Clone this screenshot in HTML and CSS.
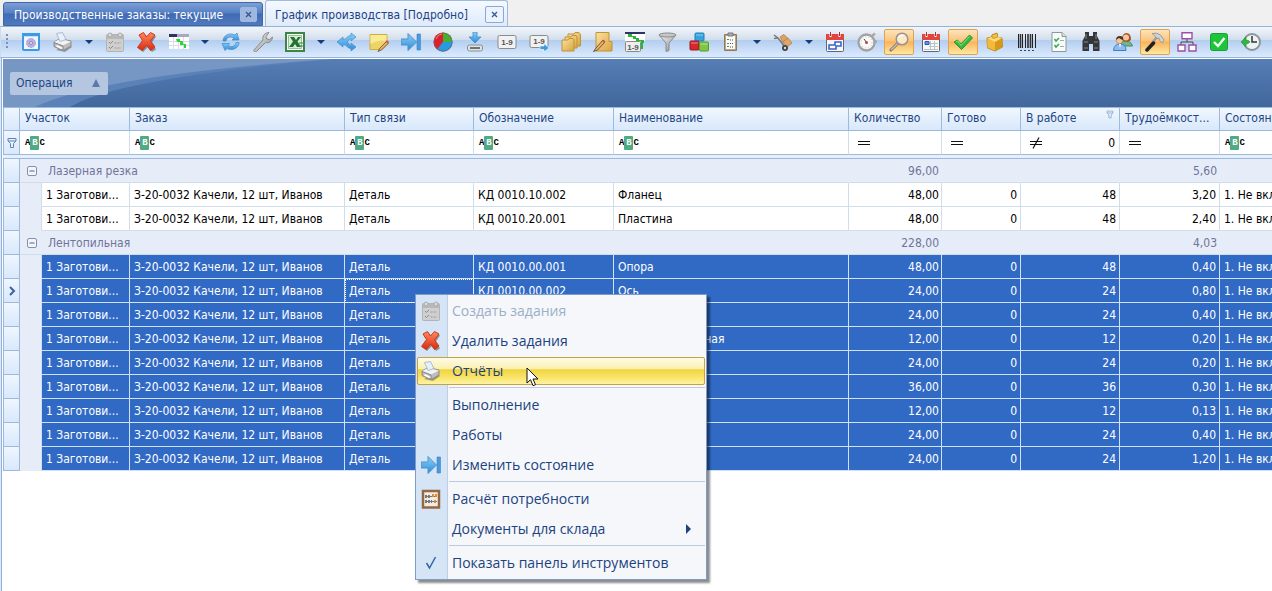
FILE: index.html
```html
<!DOCTYPE html>
<html lang="ru">
<head>
<meta charset="utf-8">
<title>График производства</title>
<link rel="stylesheet" href="styles.css">
</head>
<body>
<svg class="sprite" aria-hidden="true">
  <defs>
    <linearGradient id="gBlue" x1="0" y1="0" x2="0" y2="1"><stop offset="0" stop-color="#8fd0f7"/><stop offset="1" stop-color="#2c8bd8"/></linearGradient>
    <linearGradient id="gGold" x1="0" y1="0" x2="1" y2="1"><stop offset="0" stop-color="#fbe3a0"/><stop offset="1" stop-color="#d9a43c"/></linearGradient>
    <linearGradient id="gGray" x1="0" y1="0" x2="1" y2="1"><stop offset="0" stop-color="#f4f4f4"/><stop offset="1" stop-color="#8c8c8c"/></linearGradient>
    <linearGradient id="gRed" x1="0" y1="0" x2="0" y2="1"><stop offset="0" stop-color="#ff8a5c"/><stop offset="1" stop-color="#d92a12"/></linearGradient>
    <symbol id="i-window" viewBox="0 0 20 20"><rect x="2" y="2" width="16" height="16" rx="1" fill="#f3f5fc" stroke="#3c9be6" stroke-width="2"/><path d="M1 1h18v3H1z" fill="#3c9be6"/><path d="M3 4h14v1H3z" fill="#bfe0fa"/><circle cx="10" cy="11" r="4.500" fill="#b9b0dc" stroke="#a69ecf" stroke-dasharray="2 1"/><circle cx="10" cy="11" r="1.500" fill="#f3f1fb" stroke="#8d84bb"/></symbol>
    <symbol id="i-printer" viewBox="0 0 20 20"><path d="M3 18l9 2 7-5-3-3z" fill="#444" opacity=".45"/><path d="M1 10l6-3.500 11 2.500v5l-8 4.500-9-4z" fill="#bdbdbd" stroke="#8a8a8a"/><path d="M1 10l6-3 11 2.500-8 4z" fill="#f2f2f2"/><path d="M3.500 1.500l6-1 3.500 7-6 2z" fill="#e3f0fd" stroke="#9fb0c2" stroke-width=".8"/><path d="M1 10.500l9 3.500v4.500" fill="none" stroke="#888"/><path d="M3 14.500l5 2.500 2-1-6-3z" fill="#fff"/></symbol>
    <symbol id="i-tasks" viewBox="0 0 20 20"><rect x="1.500" y="2.500" width="17" height="17" rx="1" fill="#cfcfcf" stroke="#b4b4b4"/><path d="M2 3h16v4H2z" fill="#b8b8b8"/><circle cx="5" cy="3" r="2" fill="#ddd" stroke="#aaa"/><circle cx="15" cy="3" r="2" fill="#ddd" stroke="#aaa"/><path d="M4 10l1.500 1.500L8 9M4 15l1.500 1.500L8 14" fill="none" stroke="#888"/><path d="M9.500 11H16M9.500 16H16" stroke="#999" stroke-dasharray="2 1"/></symbol>
    <symbol id="i-delete" viewBox="0 0 20 20"><path d="M4 4l5-1 2 4 4-5 4 2.500-4 6 4 7-4 2.500-4-5-5 5-4-3 4-6z" fill="#444" opacity=".5"/><path d="M2 3l4.500-2.500 3 4.500L13.500.500 18 3l-4.500 6L18 15l-4.500 3.500-4-5.500-4 5.500-5-3 5-7z" fill="url(#gRed)" stroke="#c93818" stroke-linejoin="round"/></symbol>
    <symbol id="i-gantt" viewBox="0 0 20 20"><path d="M0 3h20v14H0z" fill="#fff"/><path d="M0 2h8v3H0z" fill="#30315c"/><path d="M8 2h12v3H8z" fill="#a9a8c2"/><path d="M0 9.500h20M0 13.500h20M4.500 5v12M9.500 5v12M14.500 5v12" stroke="#dcdcec"/><path d="M7 7h4v2h3v3h3v4h-2v-3h-4v-3H8z" fill="#2fd33b"/></symbol>
    <symbol id="i-refresh" viewBox="0 0 20 20"><path d="M2 9c0-5 6-9 12-6l2-2 2 7h-7l2-2C9 4 6 5 5 9z" fill="url(#gBlue)" stroke="#4b8fd0" stroke-width=".8"/><path d="M18 10.500c0 5-6 9-12 6l-2 2-3-7h7.500L7 13.500c4 2 7 1 8-3z" fill="url(#gBlue)" stroke="#4b8fd0" stroke-width=".8"/></symbol>
    <symbol id="i-wrench" viewBox="0 0 20 20"><path d="M1 18l9-10c-1-4 2-7.500 6-7.500l-3 4 .500 2.500 3 .500L19.500 5c0 4-4 6.500-7 5.500L3.500 19.500c-1 1-3.500 0-2.500-1.500z" fill="url(#gGray)" stroke="#8c8c8c"/></symbol>
    <symbol id="i-excel" viewBox="0 0 20 20"><path d="M1 1h18v18H1z" fill="#fff" stroke="#3c8547" stroke-width="2"/><path d="M3.500 3.500h13v13h-13z" fill="#d9efd5" stroke="#93c193"/><path d="M5 5h4l2 3 2-3h3l-3.500 4.500L16 15h-4l-2-3-2 3H4l4-5.500z" fill="#247132"/><path d="M14 14h4M14 11h4" stroke="#3c8547"/></symbol>
    <symbol id="i-share" viewBox="0 0 20 20"><path d="M0 10l6-5v2.500c4 0 4-4 8-4V1L19 5l-5 4V6.500c-2 0-2 3-4 3.500 2 .500 2 3.500 4 3.500V11l5 4-5 4v-2.500c-4 0-4-4-8-4V15z" fill="url(#gBlue)" stroke="#4a94d2" stroke-width=".8"/></symbol>
    <symbol id="i-note" viewBox="0 0 20 20"><path d="M1 2.500h17v10l-5 5H1z" fill="#ecd565" stroke="#cfae3c"/><path d="M1.500 3h16v6q-8-2-16 3z" fill="#f8ea97"/><path d="M18 9l-7 7-2 3.500 3.500-1.500 7-7z" fill="#efb06a" stroke="#6b4a2b" stroke-width=".8"/><path d="M16.500 9.500l2 2L20 10l-2-2z" fill="#df5447"/></symbol>
    <symbol id="i-forward" viewBox="0 0 20 20"><path d="M0 7h7V1.500L15.500 10 7 18.500V13H0z" fill="url(#gBlue)" stroke="#4a94d2"/><path d="M16 2h3.500v16H16z" fill="#4b9ade" stroke="#3b84c6" stroke-width=".6"/></symbol>
    <symbol id="i-pie" viewBox="0 0 20 20"><circle cx="10" cy="10" r="9.500" fill="#d9222b"/><path d="M10 10V.500a9.500 9.500 0 0 1 9.500 9.500z" fill="#45b02f"/><path d="M10 10h9.500A9.500 9.500 0 0 1 4 17.300z" fill="#279be0"/><circle cx="10" cy="10" r="9" fill="none" stroke="#666" opacity=".55"/><path d="M3 7Q5 2 9 2" stroke="#ff7d7d" fill="none"/></symbol>
    <symbol id="i-download" viewBox="0 0 20 20"><path d="M8 0h4v5h4l-6 6-6-6h4z" fill="url(#gBlue)" stroke="#3b8fd0" stroke-width=".8"/><rect x="2.500" y="13" width="15" height="6" rx="2" fill="#dfe2e5" stroke="#8b9095"/><path d="M5 16h10" stroke="#6a747d" stroke-width="2"/></symbol>
    <symbol id="i-num" viewBox="0 0 20 20"><rect x="1" y="3.500" width="18" height="13" rx="1.500" fill="#f1f1f1" stroke="#8b8b8b"/><text x="10" y="12.500" class="glyph">1-9</text></symbol>
    <symbol id="i-num-next" viewBox="0 0 20 20"><rect x="1" y="3.500" width="18" height="12" rx="1.500" fill="#f1f1f1" stroke="#8b8b8b"/><text x="10" y="12" class="glyph">1-9</text><path d="M11 14h4v-2.500l5 4.500-5 4v-2.500h-4z" fill="#3c9bdf" stroke="#fff" stroke-width=".6"/></symbol>
    <symbol id="i-folders" viewBox="0 0 20 20"><path d="M7 2h6l1-1.500h4l1.500 2V14H7z" fill="url(#gGold)" stroke="#c0923a"/><path d="M4 5h6l1-1.500h4L16 5v11H4z" fill="url(#gGold)" stroke="#c0923a"/><path d="M1 8h6l1-1.500h4L13 8v11H1z" fill="url(#gGold)" stroke="#c0923a"/></symbol>
    <symbol id="i-folder-edit" viewBox="0 0 20 20"><path d="M3 .500h13v9h3V19H3z" fill="url(#gGold)" stroke="#c0923a"/><path d="M10 8l-7 8-2.500 3.500 4-1.500 7.500-8z" fill="#efb06a" stroke="#513c28" stroke-width=".8"/><path d="M9 9l2 2 1.500-1.500-2-2z" fill="#df5447"/></symbol>
    <symbol id="i-gantt-num" viewBox="0 0 20 20"><path d="M0 0h20v9H0z" fill="#fff"/><path d="M0 0h20v2H0z" fill="#2e3364"/><path d="M3 2h4v2h4v2h3v2h5v3h-3V9h-5V7H8V5H3z" fill="#2ab535"/><rect x=".5" y="9.500" width="15" height="10" rx="1" fill="#eee" stroke="#888"/><text x="8" y="17.500" class="glyph">1-9</text><path d="M17 11v6" stroke="#2ab535" stroke-width="2"/></symbol>
    <symbol id="i-funnel" viewBox="0 0 20 20"><path d="M2 3l7 8v8.500l3-1V11l7-8z" fill="url(#gGray)" stroke="#8a8a8a"/><ellipse cx="10.500" cy="3" rx="8.500" ry="2" fill="#c4c7ca" stroke="#8a8a8a"/></symbol>
    <symbol id="i-cubes" viewBox="0 0 20 20"><rect x="6" y="1" width="9" height="8" rx="1" fill="#34a4df" stroke="#2180b5"/><rect x="1" y="9" width="9" height="9" rx="1" fill="#d7262c" stroke="#9d181c"/><rect x="10.500" y="10" width="9" height="9" rx="1" fill="#7fc646" stroke="#589c29"/><path d="M7 3h7M2 11h7M11.500 12h7" stroke="#fff" opacity=".45"/></symbol>
    <symbol id="i-clip" viewBox="0 0 20 20"><path d="M3.500 2.500h12v16h-12z" fill="#bda583" stroke="#8f7a5d"/><path d="M5 4h9v13H5z" fill="#fafafa"/><path d="M7 1h5v3H7z" fill="#aaa" stroke="#7b7b7b"/><path d="M6 7l1 1 1-1M6 11l1 1 1-1M6 14l1 1 1-1" stroke="#3c9f3c" fill="none"/><path d="M9 8h4M9 11.500h4M9 15h4" stroke="#555" stroke-dasharray="1 1"/></symbol>
    <symbol id="i-trolley" viewBox="0 0 20 20"><path d="M1 3l4 3 7 9" stroke="#777" stroke-width="1.500" fill="none"/><path d="M1 6.500l4-.500" stroke="#777" stroke-width="1.500"/><path d="M7 5l4-2.500 4 4-5 3.500z" fill="#dba267" stroke="#b5803f" stroke-width=".8"/><path d="M10 10l5-4 4 5-5 4z" fill="#e0a868" stroke="#b5803f" stroke-width=".8"/><circle cx="12" cy="16" r="3" fill="#444"/><circle cx="12" cy="16" r="1.200" fill="#ddd"/></symbol>
    <symbol id="i-cal-plan" viewBox="0 0 20 20"><rect x="1.500" y="2.500" width="17" height="17" rx="1" fill="#f8f8fb" stroke="#63656f"/><path d="M1 2h18v6H1z" fill="#e2443f"/><path d="M5.500 0v5M14.500 0v5" stroke="#fff" stroke-width="2"/><path d="M5.500 0v4M14.500 0v4" stroke="#9c3432"/><path d="M4 17v-4h6v-3h6v4h-5v3z" fill="#fff" stroke="#3c62d0" stroke-width="1.600"/></symbol>
    <symbol id="i-cal" viewBox="0 0 20 20"><rect x="1.500" y="2.500" width="17" height="17" rx="1" fill="#f8f8fb" stroke="#63656f"/><path d="M1 2h18v6H1z" fill="#e2443f"/><path d="M5.500 0v5M14.500 0v5" stroke="#fff" stroke-width="2"/><path d="M5.500 0v4M14.500 0v4" stroke="#9c3432"/><path d="M8 11.500h9M8 14.500h9M3 17.500h14M9.500 9v9M13.500 9v9" stroke="#b5c6c6"/><path d="M4 9.500h4v3H4z" fill="#6c8ee4" stroke="#3458bd"/></symbol>
    <symbol id="i-watch" viewBox="0 0 20 20"><path d="M15 4l3-2.500M18 8l1.500 3" stroke="#aaa" stroke-width="2.500"/><circle cx="9.500" cy="10.500" r="8" fill="#fafafa" stroke="#a2a2a2" stroke-width="2.300"/><circle cx="9.500" cy="10.500" r="5.500" fill="none" stroke="#bbb" stroke-dasharray="1 2"/><path d="M7 7l3 4" stroke="#444"/><circle cx="9.500" cy="10.500" r="1.500" fill="#b44"/></symbol>
    <symbol id="i-search" viewBox="0 0 20 20"><path d="M9 11l-7 7" stroke="#7f7060" stroke-width="3" stroke-linecap="round"/><path d="M9 11l-7 7" stroke="#c7c1bd" stroke-width="1.500"/><circle cx="13" cy="7" r="5.800" fill="#fbe9ca" stroke="#9a948e" stroke-width="1.500"/><path d="M9.500 6Q11 3 14 3.500" stroke="#fff" stroke-width="1.500" fill="none"/></symbol>
    <symbol id="i-check" viewBox="0 0 20 20"><path d="M1 10l3.500-2L8 12l8.500-9L19.500 6 8.500 17.500z" fill="#38b83e" stroke="#2a9632"/><path d="M3 10l2-1L8 13.500 16.500 4.500" stroke="#84e27f" fill="none"/></symbol>
    <symbol id="i-box" viewBox="0 0 20 20"><path d="M2 6l5-1V3l5-2v4l5 1 .5 9L10 19l-7.500-3z" fill="#eeb22c" stroke="#c08a1c"/><path d="M2.500 6.500L10 10v8.500l7-3.500V6z" fill="#d9971b"/><path d="M2.500 6.500v9L10 18.500V10z" fill="#f2b93a"/><path d="M2.500 6.500L9 4l8 2-7 4z" fill="#fbdc7a"/><path d="M7 3l4-1.500 1.500.500v3L9 6.500 7 5.500z" fill="#f3c14b" stroke="#b98216" stroke-width=".7"/></symbol>
    <symbol id="i-barcode" viewBox="0 0 20 20"><path d="M1.500 2v14M5.500 2v14M8.500 2v14M15.500 2v14M18.500 2v14" stroke="#222"/><path d="M3.500 2v14M11 2v14M13.500 2v14" stroke="#333" stroke-width="1.600"/><path d="M3 18.500h14" stroke="#444" stroke-dasharray="2 2"/></symbol>
    <symbol id="i-list" viewBox="0 0 20 20"><path d="M3 .500h10l4 4v15H3z" fill="#f7fbfa" stroke="#8a9a9a"/><path d="M13 .500v4h4" fill="#d6e0e0" stroke="#8a9a9a"/><path d="M5.500 7l1.500 2 3-3M5.500 13l1.500 2 3-3" stroke="#38a84c" fill="none" stroke-width="1.500"/><path d="M11 8.500h4M11 14.500h4" stroke="#9fb0a8"/></symbol>
    <symbol id="i-binoc" viewBox="0 0 20 20"><path d="M4 0h4v4h4V0h4v4l2.500 5v10H12v-7H8v7H1.500V9L4 4z" fill="#343638"/><path d="M3 10h4M13 10h4M3 16h4M13 16h4M5 2v5M15 2v5" stroke="#85898c"/></symbol>
    <symbol id="i-people" viewBox="0 0 20 20"><path d="M8 14q0-5 5-5t6.500 5z" fill="#73b48c" stroke="#4c8b66"/><path d="M9 8q0-7 4.500-7T18 8l-3 2-5-1z" fill="#a65225"/><circle cx="13" cy="5.500" r="3" fill="#f1c79f"/><path d="M.5 18.500Q1 12 7 12t6 6.500z" fill="#8bbdf0" stroke="#3f7fc5"/><circle cx="6.500" cy="8.500" r="3.300" fill="#f1c79f" stroke="#a27347" stroke-width=".6"/><path d="M3 8q0-4 4-4t3 4Q7 7 6 6 4 7 3 8z" fill="#4a3422"/><path d="M6 12l1 4 1-4" fill="#fff"/></symbol>
    <symbol id="i-hammer" viewBox="0 0 20 20"><path d="M12 5l-5 6" stroke="#9a9da0" stroke-width="2.500"/><path d="M7 1.500q5-1.500 8.500 1.500l3.500 5-1.500 3-3-2.500-.500-2.500-2 .500-2-2.500z" fill="#cdd2d6" stroke="#8b8f93" stroke-width=".8"/><path d="M8.500 11L2 18" stroke="#202020" stroke-width="3.500" stroke-linecap="round"/></symbol>
    <symbol id="i-org" viewBox="0 0 20 20"><path d="M4 13v-3h12v3M10 6v4" stroke="#444" fill="none"/><path d="M5 .800h10v6H5zM1 13h7v6H1zM12 13h7v6h-7z" fill="#fff" stroke="#9d4fa3" stroke-width="1.400"/></symbol>
    <symbol id="i-ok" viewBox="0 0 20 20"><rect x="1.500" y="1.500" width="17" height="17" rx="2" fill="#1fc43d" stroke="#1a9e35"/><path d="M5 10l4 4 6.500-8" stroke="#efffee" stroke-width="2.400" fill="none"/></symbol>
    <symbol id="i-history" viewBox="0 0 20 20"><circle cx="11" cy="10" r="8" fill="#eef2f2" stroke="#88979a" stroke-width="2"/><path d="M11 4v6h5" stroke="#333" stroke-width="1.500" fill="none"/><path d="M0 10l5-5v3q3 0 4 2-2 2-4 2v3z" fill="#2cb83c" stroke="#1f8f2e" stroke-width=".6"/></symbol>
    <symbol id="i-abacus" viewBox="0 0 20 20"><rect x="2" y="2" width="16" height="16.500" fill="#f2ece5" stroke="#946845" stroke-width="2.500"/><path d="M4 7.500h12M4 12.500h12" stroke="#777"/><path d="M4 7.500h6M4 12.500h7" stroke="#777" stroke-width="3" stroke-dasharray="2 1"/><path d="M11 6.500h5M13 12.500h3" stroke="#d88b38" stroke-width="3" stroke-dasharray="2 1"/></symbol>
    <symbol id="i-filter" viewBox="0 0 10 12"><path d="M1 1.500h8v2.500L6.500 6.500v4h-3v-4L1 4z" fill="#e8f2fd" stroke="#5f83b5"/><path d="M1 4h8" stroke="#5f83b5"/></symbol>
    <symbol id="i-minus" viewBox="0 0 10 10"><rect x=".5" y=".5" width="9" height="9" rx="1.500" fill="#f2f5fb" stroke="#8790a8"/><path d="M2.500 5h5" stroke="#4e5f84"/></symbol>
    <symbol id="i-eq" viewBox="0 0 14 12"><path d="M1 4.500h12M1 7.500h12" stroke="#111" stroke-width="1.200"/></symbol>
    <symbol id="i-ne" viewBox="0 0 14 12"><path d="M1 4.500h12M1 7.500h12M4 11.500L10 .5" stroke="#111" stroke-width="1.200"/></symbol>
  </defs>
</svg>

<nav class="tabs">
  <div class="tab"><a href="#orders">Производственные заказы: текущие</a><button class="tab-close" aria-label="Закрыть"><svg viewBox="0 0 9 9"><path d="M2 2l5 5M7 2L2 7"/></svg></button></div>
  <div class="tab active"><a href="#chart">График производства [Подробно]</a><button class="tab-close" aria-label="Закрыть"><svg viewBox="0 0 9 9"><path d="M2 2l5 5M7 2L2 7"/></svg></button></div>
</nav>

<div class="toolbar" role="toolbar">
  <span class="grip"></span>
  <button class="tool" aria-label="Настройки"><svg><use href="#i-window"/></svg></button>
  <button class="tool" aria-label="Отчёты"><svg><use href="#i-printer"/></svg></button>
  <button class="drop" aria-label="Список отчётов"></button>
  <button class="tool" aria-label="Создать задания"><svg><use href="#i-tasks"/></svg></button>
  <button class="tool" aria-label="Удалить задания"><svg><use href="#i-delete"/></svg></button>
  <button class="tool" aria-label="График"><svg><use href="#i-gantt"/></svg></button>
  <button class="drop" aria-label="Виды графика"></button>
  <button class="tool" aria-label="Обновить"><svg><use href="#i-refresh"/></svg></button>
  <button class="tool" aria-label="Сервис"><svg><use href="#i-wrench"/></svg></button>
  <button class="tool" aria-label="Экспорт"><svg><use href="#i-excel"/></svg></button>
  <button class="drop" aria-label="Варианты экспорта"></button>
  <button class="tool" aria-label="Разделить"><svg><use href="#i-share"/></svg></button>
  <button class="tool" aria-label="Заметка"><svg><use href="#i-note"/></svg></button>
  <button class="tool" aria-label="Изменить состояние"><svg><use href="#i-forward"/></svg></button>
  <button class="tool" aria-label="Диаграмма"><svg><use href="#i-pie"/></svg></button>
  <button class="tool" aria-label="Загрузить"><svg><use href="#i-download"/></svg></button>
  <button class="tool" aria-label="Номера"><svg><use href="#i-num"/></svg></button>
  <button class="tool" aria-label="Следующий номер"><svg><use href="#i-num-next"/></svg></button>
  <button class="tool" aria-label="Папки"><svg><use href="#i-folders"/></svg></button>
  <button class="tool" aria-label="Изменить папку"><svg><use href="#i-folder-edit"/></svg></button>
  <button class="tool" aria-label="Номера графика"><svg><use href="#i-gantt-num"/></svg></button>
  <button class="tool" aria-label="Фильтр"><svg><use href="#i-funnel"/></svg></button>
  <button class="tool" aria-label="Состав"><svg><use href="#i-cubes"/></svg></button>
  <button class="tool" aria-label="Ведомость"><svg><use href="#i-clip"/></svg></button>
  <button class="drop" aria-label="Ведомости"></button>
  <button class="tool" aria-label="Склад"><svg><use href="#i-trolley"/></svg></button>
  <button class="drop" aria-label="Документы склада"></button>
  <button class="tool" aria-label="План"><svg><use href="#i-cal-plan"/></svg></button>
  <button class="tool" aria-label="Время"><svg><use href="#i-watch"/></svg></button>
  <button class="tool on" aria-label="Поиск" aria-pressed="true"><svg><use href="#i-search"/></svg></button>
  <button class="tool" aria-label="Календарь"><svg><use href="#i-cal"/></svg></button>
  <button class="tool on" aria-label="Выполнение" aria-pressed="true"><svg><use href="#i-check"/></svg></button>
  <button class="tool" aria-label="Комплектация"><svg><use href="#i-box"/></svg></button>
  <button class="tool" aria-label="Штрихкод"><svg><use href="#i-barcode"/></svg></button>
  <button class="tool" aria-label="Список"><svg><use href="#i-list"/></svg></button>
  <button class="tool" aria-label="Найти"><svg><use href="#i-binoc"/></svg></button>
  <button class="tool" aria-label="Исполнители"><svg><use href="#i-people"/></svg></button>
  <button class="tool on" aria-label="Работы" aria-pressed="true"><svg><use href="#i-hammer"/></svg></button>
  <button class="tool" aria-label="Структура"><svg><use href="#i-org"/></svg></button>
  <button class="tool" aria-label="Готово"><svg><use href="#i-ok"/></svg></button>
  <button class="tool" aria-label="История"><svg><use href="#i-history"/></svg></button>
</div>

<main class="grid-view">
  <div class="group-panel">
    <svg class="swoosh" viewBox="0 0 420 48" aria-hidden="true"><path d="M0 0H330Q111 20 67 48H0z" fill="#5b82b8"/><path d="M0 0H330Q99 16 32 48H0z" fill="#7696c3"/></svg>
    <button class="group-chip">Операция<svg class="sort" viewBox="0 0 8 8"><path d="M4 0l4 8H0z"/></svg></button>
  </div>
  <table class="grid">
    <colgroup><col class="c-mark"><col class="c-indent"><col class="c-area"><col class="c-order"><col class="c-link"><col class="c-code"><col class="c-name"><col class="c-qty"><col class="c-done"><col class="c-work"><col class="c-labor"><col class="c-state"></colgroup>
    <thead>
      <tr class="head"><th class="mark"></th><th colspan="2">Участок</th><th>Заказ</th><th>Тип связи</th><th>Обозначение</th><th>Наименование</th><th>Количество</th><th>Готово</th><th><span class="filtered">В работе<svg><use href="#i-filter"/></svg></span></th><th>Трудоёмкост...</th><th>Состояние</th></tr>
      <tr class="filter"><td class="mark"><svg class="row-filter"><use href="#i-filter"/></svg></td>
        <td colspan="2"><label class="cond"><span class="abc"><i>A</i><b>B</b><i>C</i></span><input aria-label="Участок"></label></td>
        <td><label class="cond"><span class="abc"><i>A</i><b>B</b><i>C</i></span><input aria-label="Заказ"></label></td>
        <td><label class="cond"><span class="abc"><i>A</i><b>B</b><i>C</i></span><input aria-label="Тип связи"></label></td>
        <td><label class="cond"><span class="abc"><i>A</i><b>B</b><i>C</i></span><input aria-label="Обозначение"></label></td>
        <td><label class="cond"><span class="abc"><i>A</i><b>B</b><i>C</i></span><input aria-label="Наименование"></label></td>
        <td><label class="cond op"><svg><use href="#i-eq"/></svg><input aria-label="Количество"></label></td>
        <td><label class="cond op"><svg><use href="#i-eq"/></svg><input aria-label="Готово"></label></td>
        <td><label class="cond op"><svg><use href="#i-ne"/></svg><input aria-label="В работе" value="0"></label></td>
        <td><label class="cond op"><svg><use href="#i-eq"/></svg><input aria-label="Трудоёмкость"></label></td>
        <td><label class="cond"><span class="abc"><i>A</i><b>B</b><i>C</i></span><input aria-label="Состояние"></label></td></tr>
      <tr class="band"><td colspan="12"></td></tr>
    </thead>
    <tbody>
      <tr class="group"><td class="mark"></td><td colspan="6"><span class="group-name"><svg><use href="#i-minus"/></svg>Лазерная резка</span></td><td class="num">96,00</td><td></td><td></td><td class="num">5,60</td><td></td></tr>
      <tr><td class="mark"></td><td class="indent"></td><td>1 Заготови...</td><td>З-20-0032 Качели, 12 шт, Иванов</td><td>Деталь</td><td>КД 0010.10.002</td><td>Фланец</td><td class="num">48,00</td><td class="num">0</td><td class="num">48</td><td class="num">3,20</td><td>1. Не включено</td></tr>
      <tr><td class="mark"></td><td class="indent"></td><td>1 Заготови...</td><td>З-20-0032 Качели, 12 шт, Иванов</td><td>Деталь</td><td>КД 0010.20.001</td><td>Пластина</td><td class="num">48,00</td><td class="num">0</td><td class="num">48</td><td class="num">2,40</td><td>1. Не включено</td></tr>
      <tr class="group"><td class="mark"></td><td colspan="6"><span class="group-name"><svg><use href="#i-minus"/></svg>Лентопильная</span></td><td class="num">228,00</td><td></td><td></td><td class="num">4,03</td><td></td></tr>
      <tr class="sel"><td class="mark"></td><td class="indent"></td><td>1 Заготови...</td><td>З-20-0032 Качели, 12 шт, Иванов</td><td>Деталь</td><td>КД 0010.00.001</td><td>Опора</td><td class="num">48,00</td><td class="num">0</td><td class="num">48</td><td class="num">0,40</td><td>1. Не включено</td></tr>
      <tr class="sel"><td class="mark"><svg class="current" viewBox="0 0 8 10"><path d="M2 1l4 4-4 4"/></svg></td><td class="indent"></td><td>1 Заготови...</td><td>З-20-0032 Качели, 12 шт, Иванов</td><td class="focus">Деталь</td><td>КД 0010.00.002</td><td>Ось</td><td class="num">24,00</td><td class="num">0</td><td class="num">24</td><td class="num">0,80</td><td>1. Не включено</td></tr>
      <tr class="sel"><td class="mark"></td><td class="indent"></td><td>1 Заготови...</td><td>З-20-0032 Качели, 12 шт, Иванов</td><td>Деталь</td><td></td><td></td><td class="num">24,00</td><td class="num">0</td><td class="num">24</td><td class="num">0,40</td><td>1. Не включено</td></tr>
      <tr class="sel"><td class="mark"></td><td class="indent"></td><td>1 Заготови...</td><td>З-20-0032 Качели, 12 шт, Иванов</td><td>Деталь</td><td></td><td>Опора поперечная</td><td class="num">12,00</td><td class="num">0</td><td class="num">12</td><td class="num">0,20</td><td>1. Не включено</td></tr>
      <tr class="sel"><td class="mark"></td><td class="indent"></td><td>1 Заготови...</td><td>З-20-0032 Качели, 12 шт, Иванов</td><td>Деталь</td><td></td><td></td><td class="num">24,00</td><td class="num">0</td><td class="num">24</td><td class="num">0,20</td><td>1. Не включено</td></tr>
      <tr class="sel"><td class="mark"></td><td class="indent"></td><td>1 Заготови...</td><td>З-20-0032 Качели, 12 шт, Иванов</td><td>Деталь</td><td></td><td></td><td class="num">36,00</td><td class="num">0</td><td class="num">36</td><td class="num">0,30</td><td>1. Не включено</td></tr>
      <tr class="sel"><td class="mark"></td><td class="indent"></td><td>1 Заготови...</td><td>З-20-0032 Качели, 12 шт, Иванов</td><td>Деталь</td><td></td><td></td><td class="num">12,00</td><td class="num">0</td><td class="num">12</td><td class="num">0,13</td><td>1. Не включено</td></tr>
      <tr class="sel"><td class="mark"></td><td class="indent"></td><td>1 Заготови...</td><td>З-20-0032 Качели, 12 шт, Иванов</td><td>Деталь</td><td></td><td></td><td class="num">24,00</td><td class="num">0</td><td class="num">24</td><td class="num">0,40</td><td>1. Не включено</td></tr>
      <tr class="sel"><td class="mark"></td><td class="indent"></td><td>1 Заготови...</td><td>З-20-0032 Качели, 12 шт, Иванов</td><td>Деталь</td><td></td><td></td><td class="num">24,00</td><td class="num">0</td><td class="num">24</td><td class="num">1,20</td><td>1. Не включено</td></tr>
    </tbody>
  </table>
</main>

<div class="menu" role="menu">
  <button class="item" role="menuitem" disabled><span class="ico"><svg><use href="#i-tasks"/></svg></span>Создать задания</button>
  <button class="item" role="menuitem"><span class="ico"><svg><use href="#i-delete"/></svg></span>Удалить задания</button>
  <button class="item hover" role="menuitem"><span class="ico"><svg><use href="#i-printer"/></svg></span>Отчёты</button>
  <hr>
  <button class="item" role="menuitem"><span class="ico"></span>Выполнение</button>
  <button class="item" role="menuitem"><span class="ico"></span>Работы</button>
  <button class="item" role="menuitem"><span class="ico"><svg><use href="#i-forward"/></svg></span>Изменить состояние</button>
  <hr>
  <button class="item" role="menuitem"><span class="ico"><svg><use href="#i-abacus"/></svg></span>Расчёт потребности</button>
  <button class="item" role="menuitem"><span class="ico"></span>Документы для склада<span class="more"></span></button>
  <hr>
  <button class="item" role="menuitemcheckbox" aria-checked="true"><span class="ico"><svg class="tick" viewBox="0 0 20 20"><path d="M5.500 10l3 5 6-11"/></svg></span>Показать панель инструментов</button>
</div>
<svg class="cursor" viewBox="0 0 13 20" aria-hidden="true"><path d="M1 1v15l3.500-3.300 2.500 6 2.500-1-2.500-5.700h5z" fill="#fff" stroke="#111"/></svg>
</body>
</html>
```
FILE: styles.css
```css
* { box-sizing: border-box; }
html, body { height: 100%; }
body {
  margin: 0;
  display: flex;
  flex-direction: column;
  overflow: hidden;
  background: #fff;
  font: 12px/16px "DejaVu Sans Condensed", "Noto Sans", sans-serif;
  color: #000;
}
button, input { font: inherit; color: inherit; margin: 0; padding: 0; border: 0; background: none; }
a { color: inherit; text-decoration: none; }
.sprite { position: absolute; width: 0; height: 0; }
.glyph { font: bold 8px "Liberation Sans", sans-serif; text-anchor: middle; fill: #555; }

/* Tabs */
.tabs {
  flex: none;
  display: flex;
  align-items: flex-end;
  gap: 2px;
  height: 26px;
  padding-left: 3px;
  background: #f0f0f0;
}
.tab {
  display: flex;
  align-items: center;
  justify-content: space-between;
  width: 260px;
  height: 24px;
  padding: 1px 5px 0 10px;
  border: 1px solid #3f67a8;
  border-radius: 3px 3px 0 0;
  background: linear-gradient(#7d9fd6, #5680c4 45%, #3f6bb5 50%, #5179bd);
  color: #fff;
}
.tab.active {
  width: 243px;
  height: 26px;
  padding: 2px 3px 0 9px;
  border-color: #9ebbdd;
  border-bottom: 0;
  background: linear-gradient(#f4f9ff, #dfebfa);
  color: #1e3f86;
}
.tab-close {
  display: grid;
  place-items: center;
  width: 17px;
  height: 15px;
  border: 1px solid #9fb8e0;
  border-radius: 2px;
  background: #9db7de;
}
.tab.active .tab-close { width: 19px; height: 17px; border-color: #8ba9d3; background: #eaf3fe; }
.tab-close svg { width: 9px; height: 9px; stroke: #35568f; stroke-width: 1.3; }

/* Toolbar */
.toolbar {
  flex: none;
  display: flex;
  align-items: center;
  height: 32px;
  padding-left: 5px;
  border: 1px solid #93b3da;
  border-left-color: #c9dcf3;
  border-right: 0;
  background: linear-gradient(#f2f6fa, #d3deec 42%, #b4cef0 45%, #dcebfd);
  overflow: hidden;
}
.grip { flex: none; width: 9px; height: 16px; background: linear-gradient(#7793bd 2px, transparent 2px) 0 0 / 2px 4px repeat-y; }
.tool {
  flex: none;
  display: grid;
  place-items: center;
  width: 30px;
  height: 26px;
  margin: 0 1px;
  border: 1px solid transparent;
}
.tool svg { width: 20px; height: 20px; }
.tool.on {
  border-color: #e2a350;
  border-radius: 2px;
  background: linear-gradient(#fde3bb, #fbc47b 45%, #f9b35c 50%, #fde9a0);
}
.drop { flex: none; display: grid; place-items: center; width: 20px; height: 26px; }
.drop::after { content: ""; border: 4px solid transparent; border-top-color: #133f82; border-bottom: 0; }

/* Grid */
.grid-view { flex: 1; min-height: 0; overflow: hidden; border-left: 1px solid #dbe8f7; box-shadow: inset 1px 0 #8fb0db; padding-left: 2px; }
.group-panel {
  position: relative;
  display: flex;
  align-items: center;
  height: 49px;
  padding-left: 7px;
  border-top: 1px solid #fff;
  background: linear-gradient(#567eb6, #41679b);
}
.swoosh { position: absolute; left: 0; top: 0; width: 420px; height: 48px; }
.group-chip {
  position: relative;
  display: flex;
  align-items: center;
  justify-content: space-between;
  width: 98px;
  height: 23px;
  padding: 0 8px 0 6px;
  border-radius: 2px;
  background: #b5c6e0;
  color: #1f4583;
}
.sort { width: 8px; height: 8px; fill: #5c79a8; }
.grid { width: 100%; table-layout: fixed; border-collapse: separate; border-spacing: 0; }
.c-mark { width: 17px; }
.c-indent { width: 22px; }
.c-area { width: 88px; }
.c-order { width: 215px; }
.c-link { width: 129px; }
.c-code { width: 140px; }
.c-name { width: 235px; }
.c-qty { width: 93px; }
.c-done { width: 79px; }
.c-work { width: 99px; }
.c-labor { width: 100px; }
.c-state { width: 120px; }
.grid th, .grid td {
  height: 24px;
  padding: 0 4px;
  border: solid #d0deec;
  border-width: 0 1px 1px 0;
  font-weight: normal;
  text-align: left;
  white-space: nowrap;
  overflow: hidden;
  text-overflow: ellipsis;
}
.grid .head th {
  padding: 0 5px 2px;
  border-color: #9db9dc;
  border-top: 1px solid #9db9dc;
  background: linear-gradient(#f0f7ff, #d8e8fb);
  color: #1f4583;
}
.grid .filter td { padding: 0 4px; border-bottom-color: #9db9dc; }
.grid .band td { height: 4px; border-color: #9db9dc; background: #e6f0fc; }
.grid td.mark, .grid .head th.mark, .grid .filter td.mark {
  padding: 0;
  border-color: #9db9dc;
  border-left: 1px solid #9db9dc;
  background: linear-gradient(#eff6ff, #d8e8fb);
  text-align: center;
}
.grid td.indent { border-color: #e6ecf8; border-right-color: #d0deec; background: #e6ecf8; }
.grid td.num { text-align: right; padding: 0 2px; }
.grid .num + td.num { padding-right: 3px; }
.grid .group td:not(.mark) { border-right-color: #e6ecf8; background: #e6ecf8; color: #70749a; }
.grid .sel td:not(.mark):not(.indent) { border-color: #cfe2fb; background: #316ac5; color: #fff; }
.grid .sel td.focus { outline: 1px dotted #fff; outline-offset: -1px; }
.grid .group td:nth-child(2) { padding-left: 7px; }
.group-name { display: flex; align-items: center; gap: 11px; }
.group-name svg { width: 10px; height: 10px; }
.filtered { display: flex; justify-content: space-between; }
.filtered svg { width: 8px; height: 9px; opacity: .7; }
.row-filter { display: block; width: 10px; height: 12px; margin: 0 auto; }
.current { display: block; width: 8px; height: 10px; margin: 0 auto; fill: none; stroke: #3c639c; stroke-width: 2; }
.cond { display: flex; align-items: center; }
.cond input { flex: 1; width: 0; height: 20px; text-align: right; }
.cond svg { width: 14px; height: 12px; }
.cond.op { padding-left: 4px; }
.abc { display: flex; align-items: center; padding-left: 1px; font: bold 9px/14px "Liberation Mono", monospace; }
.abc i { font-style: normal; }
.abc b { width: 9px; border-radius: 1px; background: #50aa85; color: #fff; text-align: center; }

/* Context menu */
.menu {
  position: absolute;
  left: 415px;
  top: 294px;
  width: 292px;
  padding: 2px 1px 0;
  border: 1px solid #7d9cc7;
  background: linear-gradient(90deg, #d5e5f5 31px, #bccfe4 31px, #bccfe4 32px, #f5f7fa 32px);
  box-shadow: 3px 3px 2px rgba(0, 0, 0, .45);
  font: 14px/20px "Open Sans", "Noto Sans", sans-serif;
  color: #1c4280;
}
.item {
  display: flex;
  align-items: center;
  width: 100%;
  height: 30px;
  padding-bottom: 2px;
  text-align: left;
  border: 1px solid transparent;
}
.item:disabled { color: #9bb0c8; }
.item.hover {
  height: 28px;
  margin-bottom: 2px;
  padding-bottom: 0;
  border-color: #c4a245;
  border-radius: 2px;
  background: linear-gradient(#fefbe6, #fbf0b0 42%, #f0d43c 45%, #fbe774 80%, #fdf3a6);
}
.ico { display: grid; place-items: center; flex: none; width: 25px; margin-right: 9px; }
.ico svg { width: 20px; height: 20px; }
.ico .tick { fill: none; stroke: #3465a4; stroke-width: 1.5; }
.menu hr { height: 1px; margin: 0 0 3px 32px; border: 0; background: #bccbdc; }
.more { margin-left: auto; margin-right: 13px; border: 5px solid transparent; border-left-color: #1c4280; border-right: 0; }
.cursor { position: absolute; left: 526px; top: 367px; width: 13px; height: 20px; }
```
